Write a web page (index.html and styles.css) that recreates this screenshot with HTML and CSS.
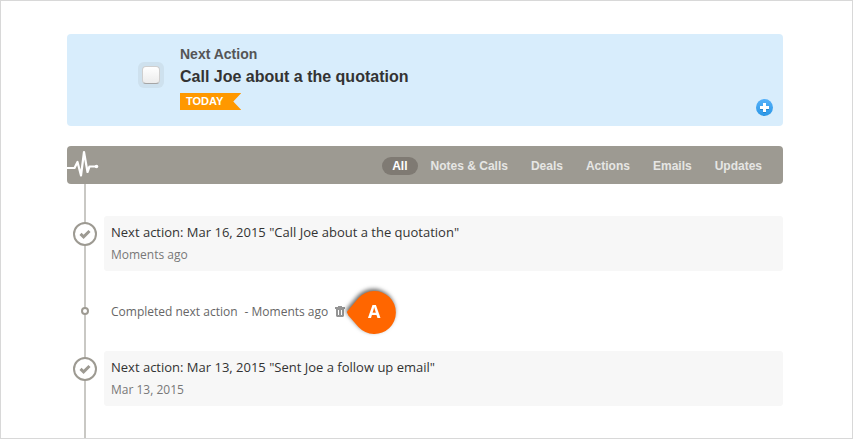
FILE: index.html
```html
<!DOCTYPE html>
<html lang="en">
<head>
<meta charset="utf-8">
<title>Next Action</title>
<link rel="stylesheet" href="styles.css">
</head>
<body>
<main class="page">
  <section class="next">
    <input class="next-check" type="checkbox" id="done">
    <div class="next-text">
      <h2 class="next-label">Next Action</h2>
      <label class="next-title" for="done">Call Joe about a the quotation</label>
      <span class="flag">TODAY</span>
    </div>
    <button class="add" type="button" aria-label="Add action">
      <svg width="17" height="17" viewBox="0 0 17 17">
        <defs><linearGradient id="blue" x1="0" y1="0" x2="0" y2="1"><stop offset="0" stop-color="#55b1fa"/><stop offset="1" stop-color="#2b97e6"/></linearGradient></defs>
        <circle cx="8.5" cy="8.5" r="8.5" fill="url(#blue)"/>
        <path d="M7 5h3v3h3v3h-3v3H7v-3H4V8h3z" fill="#2584cb"/>
        <path d="M7 4h3v3h3v3h-3v3H7v-3H4V7h3z" fill="#fff"/>
      </svg>
    </button>
  </section>

  <nav class="bar">
    <svg class="pulse" width="32" height="38" viewBox="0 0 32 38">
      <path d="M0 22H7.500L10.500 16L14 29.500L17 6L20.500 26L22.500 20.500H29" fill="none" stroke="#fff" stroke-width="2.200" stroke-linejoin="round"/>
      <circle cx="29.500" cy="20.500" r="1.800" fill="#fff"/>
    </svg>
    <div class="tabs">
      <a class="tab tab-on" href="#all">All</a>
      <a class="tab" href="#notes">Notes &amp; Calls</a>
      <a class="tab" href="#deals">Deals</a>
      <a class="tab" href="#actions">Actions</a>
      <a class="tab" href="#emails">Emails</a>
      <a class="tab" href="#updates">Updates</a>
    </div>
  </nav>

  <ul class="timeline">
    <li class="entry">
      <span class="mark"><svg width="12" height="10" viewBox="0 0 12 10"><path d="M1.500 4.800L4.600 7.800L10.500 2" fill="none" stroke="#9d9a92" stroke-width="3"/></svg></span>
      <div class="card">
        <p class="card-title">Next action: Mar 16, 2015 "Call Joe about a the quotation"</p>
        <p class="card-date">Moments ago</p>
      </div>
    </li>
    <li class="entry">
      <span class="dot"></span>
      <p class="event">
        <span>Completed next action</span>
        <span>- Moments ago</span>
        <button class="trash" type="button" aria-label="Delete">
          <svg width="10" height="11" viewBox="0 0 10 11"><path fill="#949494" fill-rule="evenodd" d="M3 0h4v1h3v2H0V1h3zM1 3h8v7l-1 1H2L1 10zM3 4v5h1V4zM6 4v5h1V4z"/></svg>
          <span class="pin">
            <svg width="60" height="53" viewBox="0 0 60 53">
              <path d="M7 28Q5 26 7 24.500L17.500 12A21.500 21.500 0 1 1 17.500 41L7 29Z" fill="#ff6600"/>
            </svg>
            <b class="pin-text">A</b>
          </span>
        </button>
      </p>
    </li>
    <li class="entry">
      <span class="mark"><svg width="12" height="10" viewBox="0 0 12 10"><path d="M1.500 4.800L4.600 7.800L10.500 2" fill="none" stroke="#9d9a92" stroke-width="3"/></svg></span>
      <div class="card">
        <p class="card-title">Next action: Mar 13, 2015 "Sent Joe a follow up email"</p>
        <p class="card-date">Mar 13, 2015</p>
      </div>
    </li>
  </ul>
</main>
</body>
</html>
```
FILE: styles.css
```css
* {
  box-sizing: border-box;
}

body,
h2,
p,
ul {
  margin: 0;
  padding: 0;
}

button {
  padding: 0;
  border: 0;
  background: none;
  cursor: pointer;
}

svg {
  display: block;
}

.page {
  min-height: 100vh;
  padding: 33px 69px 0 66px;
  border: 1px solid #d8d8d8;
  background: #fff;
  font-family: "Liberation Sans", Arial, sans-serif;
}

.next {
  display: flex;
  align-items: flex-start;
  gap: 16px;
  padding: 12px 10px 10px 71px;
  border-radius: 4px;
  background: #d8edfc;
}

.next-check {
  appearance: none;
  display: grid;
  place-items: center;
  width: 26px;
  height: 26px;
  margin: 16px 0 0;
  border-radius: 6px;
  background: #cee1ee;
}

.next-check::before {
  content: "";
  width: 16px;
  height: 16px;
  border: 1px solid #cfcfcf;
  border-bottom-color: #a5a5a5;
  border-radius: 4px;
  background: linear-gradient(#fff, #ececec);
}

.next-check:checked::before {
  background: #2b97e6;
}

.next-text {
  flex: 1;
  display: flex;
  flex-direction: column;
  align-items: flex-start;
  padding-bottom: 6px;
}

.next-label {
  color: #555;
  font-size: 14px;
  line-height: 16px;
}

.next-title {
  margin-top: 5px;
  color: #333;
  font-size: 16px;
  font-weight: bold;
  line-height: 20px;
}

.flag {
  margin-top: 6px;
  padding: 0 18px 0 6px;
  background: #ff9800;
  clip-path: polygon(0 0, 100% 0, calc(100% - 8px) 50%, 100% 100%, 0 100%);
  color: #fff;
  font-size: 11px;
  font-weight: bold;
  line-height: 17px;
}

.add {
  align-self: flex-end;
}

.bar {
  display: flex;
  justify-content: space-between;
  align-items: center;
  height: 38px;
  margin-top: 20px;
  padding-right: 11px;
  border-radius: 4px;
  background: #9d9a92;
}

.tabs {
  display: flex;
  gap: 3px;
  padding-top: 2px;
}

.tab {
  padding: 0 10px;
  border-radius: 9px;
  color: #e6e6e4;
  font-size: 12px;
  font-weight: bold;
  line-height: 18px;
  text-decoration: none;
}

.tab-on {
  background: #7f7a73;
  color: #fff;
}

.timeline {
  position: relative;
  display: grid;
  gap: 32px;
  padding: 32px 0;
  list-style: none;
  font-family: "Open Sans", sans-serif;
}

.timeline::before {
  content: "";
  position: absolute;
  top: 0;
  bottom: 0;
  left: 17px;
  width: 2px;
  background: #c9c8c4;
}

.entry {
  position: relative;
  display: grid;
  grid-template-columns: 36px 1fr;
  gap: 1px;
  justify-items: center;
}

.mark {
  display: grid;
  place-items: center;
  width: 24px;
  height: 24px;
  margin-top: 6px;
  border: 2px solid #9d9a92;
  border-radius: 50%;
  background: #fff;
}

.dot {
  width: 8px;
  height: 8px;
  margin-top: 4px;
  border: 2px solid #9d9a92;
  border-radius: 50%;
  background: #fff;
}

.card {
  justify-self: stretch;
  padding: 5px 7px;
  border-radius: 3px;
  background: #f7f7f7;
}

.card-title {
  color: #333;
  font-size: 13px;
  line-height: 22px;
}

.card-date {
  margin-top: 1px;
  color: #777;
  font-size: 12px;
  line-height: 22px;
}

.event {
  justify-self: start;
  display: flex;
  align-items: center;
  gap: 7px;
  padding: 1px 0 0 7px;
  color: #666;
  font-size: 12px;
  line-height: 15px;
}

.trash {
  position: relative;
}

.pin {
  position: absolute;
  top: 50%;
  left: 6px;
  display: grid;
  justify-items: center;
  margin-top: -26px;
  filter: drop-shadow(-1px -2px 2px rgba(0, 0, 0, 0.6));
}

.pin svg,
.pin-text {
  grid-area: 1 / 1;
}

.pin-text {
  padding-left: 6px;
  color: #fff;
  font-family: "Open Sans", sans-serif;
  font-size: 18px;
  line-height: 50px;
}
```
